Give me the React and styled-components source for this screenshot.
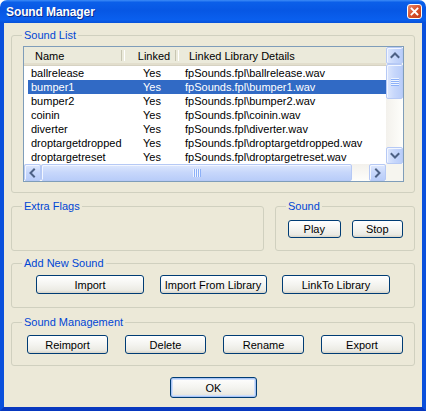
import React from "react";
import styled, { createGlobalStyle } from "styled-components";

const GlobalStyle = createGlobalStyle`
  html, body {
    margin: 0;
    padding: 0;
    background: #ffffff;
  }
  body {
    font-family: "Liberation Sans", Arial, sans-serif;
    font-size: 11px;
    color: #000000;
  }
  * { box-sizing: border-box; }
`;

const Window = styled.div`
  width: 426px;
  height: 411px;
  display: flex;
  flex-direction: column;
`;

const TitleBar = styled.div`
  height: 23px;
  flex: none;
  display: flex;
  align-items: center;
  justify-content: space-between;
  padding: 0 4px 0 6px;
  border-radius: 7px 7px 0 0;
  background: linear-gradient(
    180deg,
    #3d8cf7 0%,
    #0b5fe9 10%,
    #0757e4 45%,
    #0a5fee 85%,
    #0651d8 100%
  );
`;

const Title = styled.span`
  color: #ffffff;
  font-weight: bold;
  font-size: 12px;
  letter-spacing: -0.1px;
  text-shadow: 1px 1px 0 #0a2a8a;
`;

const CloseButton = styled.div`
  width: 15px;
  height: 15px;
  border: 1px solid #ffffff;
  border-radius: 3px;
  background: linear-gradient(135deg, #e9896c 0%, #d9522c 50%, #c23d19 100%);
  display: flex;
  align-items: center;
  justify-content: center;
`;

const Body = styled.div`
  flex: 1;
  display: flex;
  flex-direction: column;
  background: #ece9d8;
  border-style: solid;
  border-color: #0a50dc;
  border-width: 0 4px 4px 4px;
  border-bottom-color: #0838bf;
  padding: 6px 7px 0 7px;
`;

const GroupBox = styled.fieldset`
  margin: ${(p) => p.$mt || 0}px 0 0 0;
  padding: 0;
  min-width: 0;
  border: 1px solid #d0d0bf;
  border-radius: 3px;
  flex: ${(p) => (p.$grow ? 1 : "none")};
  width: ${(p) => (p.$w ? `${p.$w}px` : "auto")};
`;

const Legend = styled.legend`
  margin-left: 10px;
  padding: 0 2px;
  height: 13px;
  line-height: 13px;
  font-size: 11px;
  color: #0046d5;
`;

const GroupInner = styled.div`
  display: flex;
  align-items: flex-start;
  justify-content: ${(p) => p.$justify || "flex-start"};
  gap: ${(p) => p.$gap || 0}px;
  padding: ${(p) => p.$pad};
`;

const Columns = styled.div`
  display: flex;
  gap: 11px;
  margin-top: 7px;
`;

const Button = styled.button`
  width: ${(p) => p.$w}px;
  height: ${(p) => p.$h || 19}px;
  padding: 0;
  font-family: "Liberation Sans", Arial, sans-serif;
  font-size: 11px;
  color: #000000;
  border: 1px solid #003c74;
  border-radius: 3px;
  background: linear-gradient(
    180deg,
    #ffffff 0%,
    #f4f4f0 50%,
    #ebeae3 85%,
    #d8d4c8 100%
  );
  box-shadow: ${(p) =>
    p.$default
      ? "inset 0 0 0 1px #a9c4f4, inset 0 0 0 2px #cfdffb"
      : "none"};
`;

const Footer = styled.div`
  display: flex;
  justify-content: center;
  margin-top: 11px;
  padding-left: 1px;
`;

/* list view */

const ListView = styled.div`
  width: 381px;
  height: 136px;
  border: 1px solid #7f9db9;
  background: #ffffff;
  display: grid;
  grid-template-columns: 362px 17px;
  grid-template-rows: 117px 17px;
`;

const ListArea = styled.div`
  overflow: hidden;
  display: flex;
  flex-direction: column;
`;

const Header = styled.div`
  height: 19px;
  flex: none;
  display: flex;
  background: #ebeadb;
  border-bottom: 1px solid #d6d2c2;
  box-shadow: inset 0 -2px 0 #e2decd;
`;

const HeaderCell = styled.div`
  position: relative;
  width: ${(p) => (p.$w ? `${p.$w}px` : "auto")};
  flex: ${(p) => (p.$w ? "none" : 1)};
  line-height: 18px;
  white-space: nowrap;
  text-align: ${(p) => p.$align || "left"};
  padding: ${(p) => p.$pad || "0 0 0 10px"};
  &::after {
    content: "";
    display: ${(p) => (p.$divider ? "block" : "none")};
    position: absolute;
    right: 0;
    top: 3px;
    bottom: 4px;
    width: 2px;
    border-left: 1px solid #c7c5b2;
    border-right: 1px solid #ffffff;
  }
`;

const Row = styled.div`
  display: grid;
  grid-template-columns: 97px 54px 1fr;
  height: 14px;
  line-height: 14px;
  margin-left: 4px;
  flex: none;
  white-space: nowrap;
  background: ${(p) => (p.$selected ? "#316ac5" : "transparent")};
  color: ${(p) => (p.$selected ? "#ffffff" : "#000000")};
`;

const Cell = styled.div`
  overflow: hidden;
  text-align: ${(p) => p.$align || "left"};
  padding-left: ${(p) => p.$pl || 0}px;
`;

const VScroll = styled.div`
  display: flex;
  flex-direction: column;
  background: linear-gradient(90deg, #f3f1ec 0%, #fefefb 100%);
`;

const HScroll = styled.div`
  display: flex;
  background: linear-gradient(180deg, #f3f1ec 0%, #fefefb 100%);
`;

const ScrollTrack = styled.div`
  flex: 1;
`;

const ScrollCorner = styled.div`
  background: #f6f5ef;
`;

const ScrollPart = styled.div`
  flex: none;
  width: ${(p) => p.$w || 17}px;
  height: ${(p) => p.$h || 17}px;
  display: flex;
  align-items: center;
  justify-content: center;
  border: 1px solid #b6c9f5;
  border-radius: 2px;
  background: ${(p) =>
    p.$horizontal
      ? "linear-gradient(180deg, #dde7fd 0%, #c7d7fb 50%, #b9cdf9 100%)"
      : "linear-gradient(90deg, #dde7fd 0%, #c7d7fb 50%, #b9cdf9 100%)"};
  box-shadow: inset 1px 1px 0 #f2f6ff;
`;

const Chevron = ({ dir }) => {
  const paths = {
    up: "M1.5 6 L5 2.5 L8.5 6",
    down: "M1.5 3 L5 6.5 L8.5 3",
    left: "M6 1.5 L2.5 5 L6 8.5",
    right: "M3 1.5 L6.5 5 L3 8.5",
  };
  return (
    <svg width="10" height="10" viewBox="0 0 10 10">
      <path
        d={paths[dir]}
        fill="none"
        stroke="#4d6185"
        strokeWidth="2"
        strokeLinecap="square"
      />
    </svg>
  );
};

const Grip = ({ horizontal }) => (
  <svg width="8" height="8" viewBox="0 0 8 8">
    {[0, 2, 4, 6].map((o) =>
      horizontal ? (
        <g key={o}>
          <rect x={o} y="0" width="1" height="8" fill="#eef4fe" />
          <rect x={o + 1} y="0" width="1" height="8" fill="#8cb0f8" />
        </g>
      ) : (
        <g key={o}>
          <rect x="0" y={o} width="8" height="1" fill="#eef4fe" />
          <rect x="0" y={o + 1} width="8" height="1" fill="#8cb0f8" />
        </g>
      )
    )}
  </svg>
);

const sounds = [
  "ballrelease",
  "bumper1",
  "bumper2",
  "coinin",
  "diverter",
  "droptargetdropped",
  "droptargetreset",
];

const SoundList = () => (
  <ListView>
    <ListArea>
      <Header>
        <HeaderCell $w={101} $divider $pad="0 0 0 11px">
          Name
        </HeaderCell>
        <HeaderCell $w={54} $divider $align="center" $pad="0 0 0 4px">
          Linked
        </HeaderCell>
        <HeaderCell>Linked Library Details</HeaderCell>
      </Header>
      {sounds.map((name) => (
        <Row key={name} $selected={name === "bumper1"}>
          <Cell $pl={3}>{name}</Cell>
          <Cell $align="center">Yes</Cell>
          <Cell $pl={6}>fpSounds.fpl\{name}.wav</Cell>
        </Row>
      ))}
    </ListArea>
    <VScroll>
      <ScrollPart>
        <Chevron dir="up" />
      </ScrollPart>
      <ScrollPart $h={35}>
        <Grip />
      </ScrollPart>
      <ScrollTrack />
      <ScrollPart>
        <Chevron dir="down" />
      </ScrollPart>
    </VScroll>
    <HScroll>
      <ScrollPart $horizontal>
        <Chevron dir="left" />
      </ScrollPart>
      <ScrollPart $horizontal $w={311}>
        <Grip horizontal />
      </ScrollPart>
      <ScrollTrack />
      <ScrollPart $horizontal>
        <Chevron dir="right" />
      </ScrollPart>
    </HScroll>
    <ScrollCorner />
  </ListView>
);

const App = () => (
  <>
    <GlobalStyle />
    <Window>
      <TitleBar>
        <Title>Sound Manager</Title>
        <CloseButton>
          <svg width="9" height="9" viewBox="0 0 9 9">
            <path
              d="M1.5 1.5 L7.5 7.5 M7.5 1.5 L1.5 7.5"
              stroke="#ffffff"
              strokeWidth="1.8"
              strokeLinecap="square"
            />
          </svg>
        </CloseButton>
      </TitleBar>
      <Body>
        <GroupBox>
          <Legend>Sound List</Legend>
          <GroupInner $pad="4px 10px 10px 11px">
            <SoundList />
          </GroupInner>
        </GroupBox>

        <Columns>
          <GroupBox $w={253}>
            <Legend>Extra Flags</Legend>
          </GroupBox>
          <GroupBox $grow>
            <Legend>Sound</Legend>
            <GroupInner $pad="7px 11px 12px 12px" $gap={11}>
              <Button $w={53} $h={18}>
                Play
              </Button>
              <Button $w={52} $h={18}>
                Stop
              </Button>
            </GroupInner>
          </GroupBox>
        </Columns>

        <GroupBox $mt={6}>
          <Legend>Add New Sound</Legend>
          <GroupInner $pad="5px 24px 13px 24px" $justify="space-between">
            <Button $w={108}>Import</Button>
            <Button $w={107}>Import From Library</Button>
            <Button $w={108}>LinkTo Library</Button>
          </GroupInner>
        </GroupBox>

        <GroupBox $mt={8}>
          <Legend>Sound Management</Legend>
          <GroupInner $pad="6px 11px 11px 15px" $justify="space-between">
            <Button $w={81}>Reimport</Button>
            <Button $w={81}>Delete</Button>
            <Button $w={81}>Rename</Button>
            <Button $w={82}>Export</Button>
          </GroupInner>
        </GroupBox>

        <Footer>
          <Button $w={87} $h={21} $default>
            OK
          </Button>
        </Footer>
      </Body>
    </Window>
  </>
);

export default App;
